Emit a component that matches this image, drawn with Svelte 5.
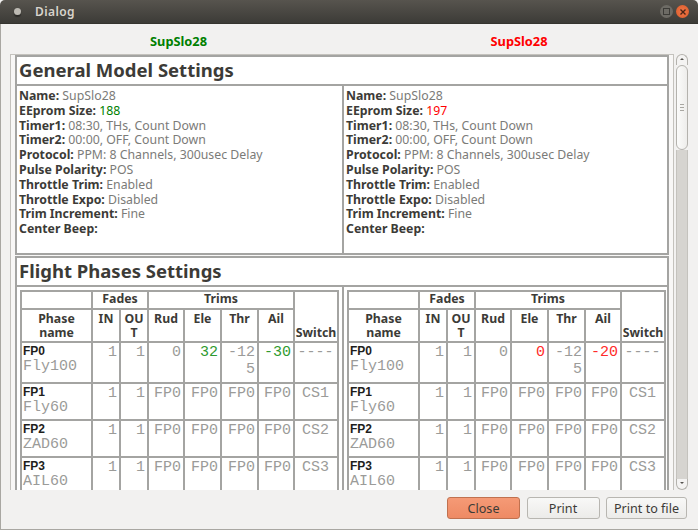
<script lang="ts">
  const general = (size: string) => [
    ["Name:", "SupSlo28"],
    ["EEprom Size:", size],
    ["Timer1:", "08:30, THs, Count Down"],
    ["Timer2:", "00:00, OFF, Count Down"],
    ["Protocol:", "PPM: 8 Channels, 300usec Delay"],
    ["Pulse Polarity:", "POS"],
    ["Throttle Trim:", "Enabled"],
    ["Throttle Expo:", "Disabled"],
    ["Trim Increment:", "Fine"],
    ["Center Beep:", ""],
  ];

  const models = [
    { tone: "good", size: "188", ele: "32", ail: "-30" },
    { tone: "bad", size: "197", ele: "0", ail: "-20" },
  ];

  const phases = [
    ["FP1", "Fly60", "CS1"],
    ["FP2", "ZAD60", "CS2"],
    ["FP3", "AIL60", "CS3"],
  ];
</script>

<div class="window">
  <header class="titlebar">
    <span class="menu-dot"></span>
    <span class="title">Dialog</span>
    <span class="controls">
      <span class="btn-max"><i></i></span>
      <span class="btn-close">
        <svg viewBox="0 0 8 8" width="8" height="8"><path d="M1.5 1.5l5 5M6.5 1.5l-5 5" stroke="#4a2415" stroke-width="1.4" fill="none" /></svg>
      </span>
    </span>
  </header>

  <main class="body">
    <div class="names">
      <span class="good">SupSlo28</span>
      <span class="bad">SupSlo28</span>
    </div>

    <div class="middle">
      <div class="view">
        <div class="page">
          <section class="block">
            <h1>General Model Settings</h1>
            <div class="split general">
              {#each models as m}
                <div class="col">
                  {#each general(m.size) as [k, v]}
                    <div class="line"><b>{k}</b> <span class={k.startsWith("EEprom") ? m.tone : "val"}>{v}</span></div>
                  {/each}
                </div>
              {/each}
            </div>
          </section>

          <section class="block">
            <h1>Flight Phases Settings</h1>
            <div class="split phases">
              {#each models as m}
                <div class="col">
                  <table>
                    <colgroup>
                      <col style="width:71px" /><col style="width:28px" /><col style="width:28px" />
                      <col style="width:36px" /><col style="width:37px" /><col style="width:37px" /><col style="width:36px" /><col />
                    </colgroup>
                    <thead>
                      <tr class="h1">
                        <th></th>
                        <th colspan="2">Fades</th>
                        <th colspan="4">Trims</th>
                        <th rowspan="2" class="sw">Switch</th>
                      </tr>
                      <tr class="h2">
                        <th>Phase<br />name</th>
                        <th>IN</th>
                        <th>OU<br />T</th>
                        <th>Rud</th>
                        <th>Ele</th>
                        <th>Thr</th>
                        <th>Ail</th>
                      </tr>
                    </thead>
                    <tbody>
                      <tr class="fp0">
                        <td class="ph"><b>FP0</b><br /><span>Fly100</span></td>
                        <td class="num">1</td>
                        <td class="num">1</td>
                        <td class="num">0</td>
                        <td class="num {m.tone}">{m.ele}</td>
                        <td class="num wrap">-12<br />5</td>
                        <td class="num {m.tone}">{m.ail}</td>
                        <td class="txt">----</td>
                      </tr>
                      {#each phases as [id, name, sw]}
                        <tr>
                          <td class="ph"><b>{id}</b><br /><span>{name}</span></td>
                          <td class="num">1</td>
                          <td class="num">1</td>
                          <td class="num">FP0</td>
                          <td class="num">FP0</td>
                          <td class="num">FP0</td>
                          <td class="num">FP0</td>
                          <td class="txt">{sw}</td>
                        </tr>
                      {/each}
                    </tbody>
                  </table>
                </div>
              {/each}
            </div>
          </section>
        </div>
      </div>

      <div class="scrollbar">
        <span class="arrow up"></span>
        <div class="thumb"><i></i></div>
        <div class="rest"></div>
        <span class="arrow down"></span>
      </div>
    </div>

    <footer class="actions">
      <button class="primary">Close</button>
      <button>Print</button>
      <button class="wide">Print to file</button>
    </footer>
  </main>
</div>

<style>
  :global(body) {
    margin: 0;
    background: #fff;
  }

  .window {
    width: 698px;
    height: 530px;
    display: flex;
    flex-direction: column;
    overflow: hidden;
    font-family: "Noto Sans", "Open Sans", sans-serif;
    background: #f2f1f0;
  }

  .titlebar {
    height: 24px;
    flex: none;
    display: flex;
    align-items: center;
    border-radius: 5px 5px 0 0;
    background: linear-gradient(#57544e, #3c3b37);
    border-bottom: 1px solid #35342f;
    box-sizing: border-box;
    color: #d8d4cc;
    font-size: 12px;
    font-weight: 600;
  }

  .menu-dot {
    width: 7px;
    height: 7px;
    margin-left: 14px;
    border-radius: 50%;
    background: #bdbab3;
    box-shadow: 0 2px 1px #2b2a27;
  }

  .title {
    margin-left: 14px;
    letter-spacing: 0.4px;
  }

  .controls {
    margin-left: auto;
    margin-right: 9px;
    display: flex;
    gap: 3px;
  }

  .btn-max,
  .btn-close {
    width: 13px;
    height: 13px;
    border-radius: 50%;
    display: flex;
    align-items: center;
    justify-content: center;
  }

  .btn-max {
    background: #6d6b65;
  }

  .btn-max i {
    width: 5px;
    height: 5px;
    border: 1px solid #3c3b37;
  }

  .btn-close {
    background: radial-gradient(#f0784a, #dc5a28);
  }

  .body {
    flex: 1;
    min-height: 0;
    display: flex;
    flex-direction: column;
    border-left: 1px solid #a9a7a2;
    border-bottom: 1px solid #a9a7a2;
    box-sizing: border-box;
  }

  .names {
    height: 30px;
    flex: none;
    box-sizing: border-box;
    padding-top: 3px;
    display: grid;
    grid-template-columns: 355px 326px;
    align-items: center;
    justify-items: center;
    font-size: 12.8px;
    font-weight: 700;
  }

  .good {
    color: #008000;
  }

  .bad {
    color: #ff0000;
  }

  .middle {
    height: 436px;
    flex: none;
    display: flex;
    padding-left: 9px;
  }

  .view {
    width: 664px;
    height: 100%;
    overflow: hidden;
    box-sizing: border-box;
    background: #f8f7f6;
    border: 1px solid #c4c2bd;
    border-bottom: 0;
    padding-left: 4px;
  }

  .page {
    width: 654px;
    display: flex;
    flex-direction: column;
    gap: 1px;
  }

  .block {
    background: #fff;
    border: 2px solid #a4a4a2;
    box-sizing: border-box;
  }

  h1 {
    margin: 0;
    height: 27px;
    padding-left: 2px;
    font-size: 18.5px;
    line-height: 25px;
    font-weight: 700;
    color: #3c3b37;
    border-bottom: 2px solid #a4a4a2;
    box-sizing: content-box;
    white-space: nowrap;
  }

  .split {
    display: grid;
    grid-template-columns: 325px 1fr;
  }

  .general {
    height: 167px;
  }

  .general .col {
    padding: 2px 0 0 2px;
  }

  .general .col + .col,
  .phases .col + .col {
    border-left: 2px solid #a4a4a2;
  }

  .line {
    height: 14.8px;
    line-height: 15px;
    font-size: 12.3px;
    white-space: nowrap;
    color: #3c3b37;
  }

  .line b {
    font-weight: 700;
  }

  .val {
    color: #7b7b78;
  }

  .phases .col {
    padding: 3px 0 0 3px;
    overflow: hidden;
  }

  table {
    width: 319px;
    table-layout: fixed;
    border-collapse: collapse;
    font-size: 12.3px;
    color: #3c3b37;
    border: 2px solid #a4a4a2;
  }

  th,
  td {
    border: 2px solid #a4a4a2;
    padding: 0;
    overflow: hidden;
    box-sizing: border-box;
  }

  th {
    font-weight: 700;
    line-height: 14px;
    vertical-align: top;
  }

  .h1 th {
    height: 18px;
    padding-bottom: 2px;
    vertical-align: middle;
  }

  .h1 th.sw {
    vertical-align: bottom;
    padding-bottom: 1px;
  }

  .h2 th {
    height: 33px;
    padding-top: 2px;
  }

  td {
    vertical-align: top;
    height: 37px;
    font-family: "Liberation Mono", monospace;
    font-size: 15px;
    line-height: 16.5px;
    color: #9b9b99;
    padding: 2px 2px 0 1px;
  }

  .fp0 td {
    height: 41px;
  }

  td.ph {
    line-height: 15px;
    padding: 1px 0 0 1px;
  }

  .ph b {
    font-family: "Liberation Sans", sans-serif;
    font-size: 12px;
    color: #1e1e1c;
  }

  .num {
    text-align: right;
  }

  .txt {
    text-align: center;
  }

  td.good {
    color: #2f9a2f;
  }

  td.bad {
    color: #ff2a2a;
  }

  .scrollbar {
    width: 12px;
    height: 100%;
    margin-left: 2px;
    display: flex;
    flex-direction: column;
    align-items: stretch;
  }

  .arrow {
    height: 11px;
    flex: none;
    border: 1px solid #b4b2ad;
    background: #f4f3f2;
    position: relative;
    box-sizing: border-box;
  }

  .arrow.up {
    border-radius: 6px 6px 0 0;
    border-bottom: 0;
  }

  .arrow.down {
    border-radius: 0 0 6px 6px;
    border-top: 0;
  }

  .arrow::after {
    content: "";
    position: absolute;
    left: 3px;
    border: 2px solid transparent;
  }

  .arrow.up::after {
    border-bottom-color: #55534e;
    top: 1px;
  }

  .arrow.down::after {
    border-top-color: #55534e;
    top: 3px;
  }

  .thumb {
    height: 85px;
    flex: none;
    box-sizing: border-box;
    border: 1px solid #b4b2ad;
    border-radius: 6px;
    background: linear-gradient(90deg, #fbfbfa, #eeedeb);
    display: flex;
    align-items: center;
    justify-content: center;
  }

  .thumb i {
    width: 4px;
    height: 7px;
    background: repeating-linear-gradient(#a9a7a2 0 1px, transparent 1px 3px);
  }

  .rest {
    flex: 1;
    background: #d6d4d0;
    border-left: 1px solid #c4c2bd;
    border-right: 1px solid #c4c2bd;
  }

  .actions {
    flex: 1;
    display: flex;
    justify-content: flex-end;
    gap: 6.5px;
    padding: 7px 11px 0 0;
  }

  button {
    width: 73px;
    height: 22px;
    padding: 0;
    font-family: inherit;
    font-size: 12.6px;
    color: #3c3b37;
    border: 1px solid #b8b6b1;
    border-radius: 3px;
    background: linear-gradient(#f8f8f7, #ecebe9);
  }

  button.wide {
    width: 81px;
  }

  button.primary {
    border-color: #c0714f;
    background: linear-gradient(#f59a76, #ee8a64);
  }
</style>
